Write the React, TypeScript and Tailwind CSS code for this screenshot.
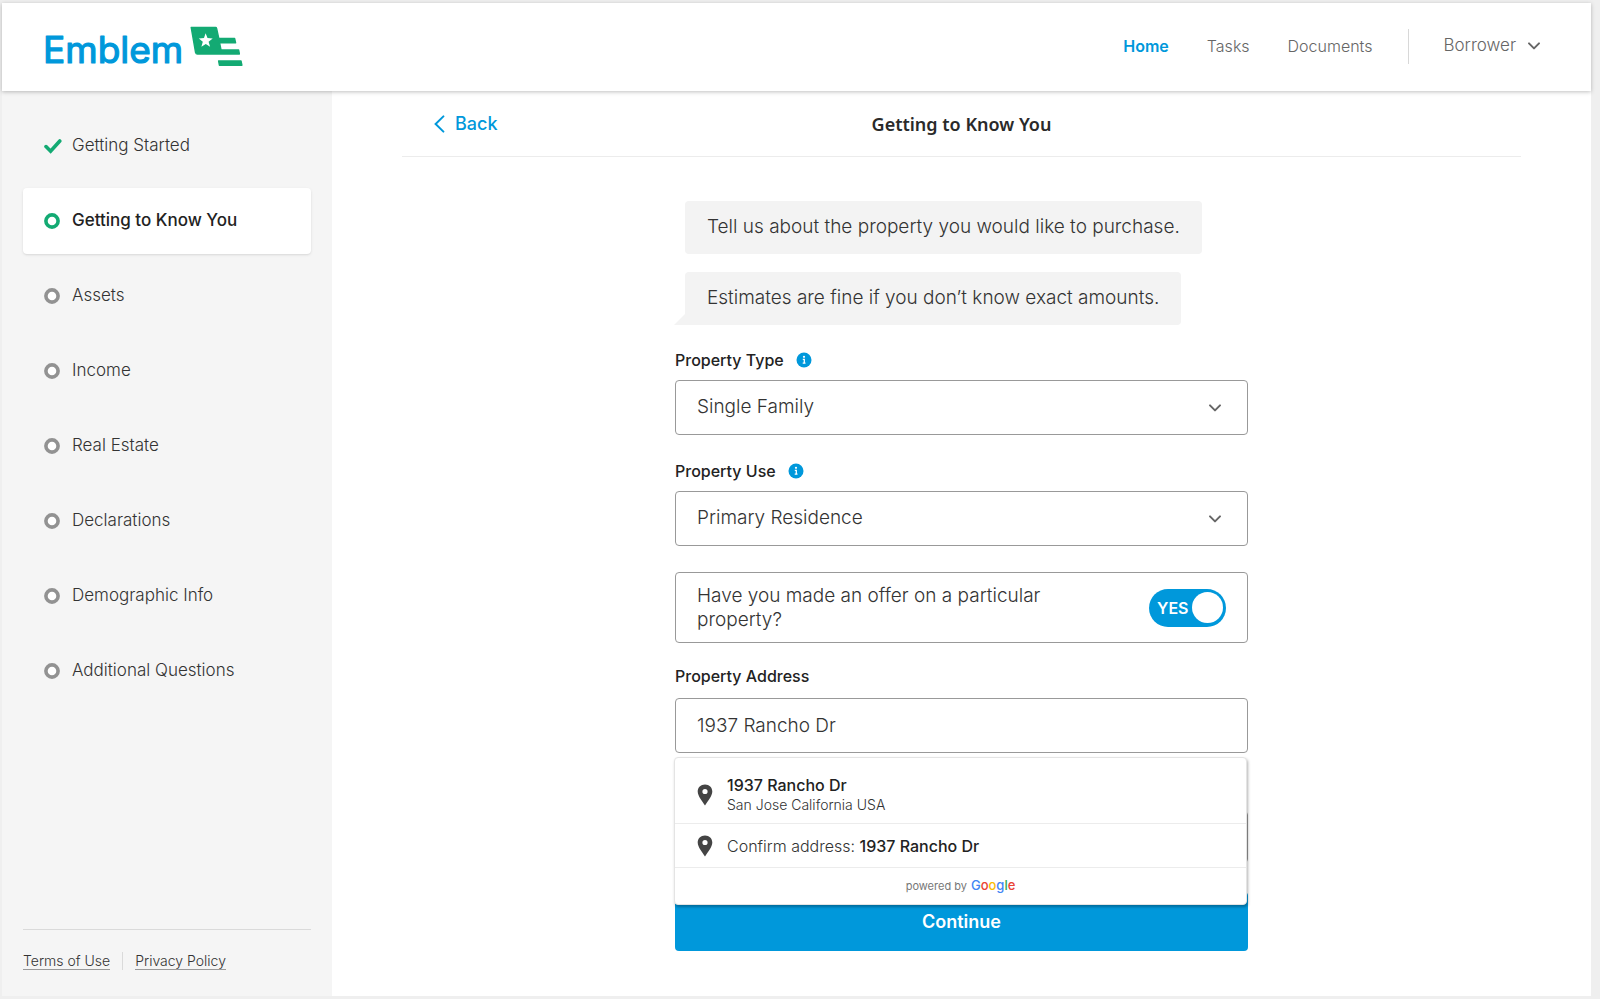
import { useState } from "react";
import type { ReactNode } from "react";

const font = "font-['Inter','Liberation_Sans',sans-serif]";

function Logo() {
  return (
    <svg width="200" height="56" viewBox="0 -7 200 56" role="img" aria-label="Emblem" className="block overflow-visible">
      <text
        x="-1"
        y="37"
        className="font-['Inter',sans-serif] text-[37px] font-normal"
        fill="#0098db"
        stroke="#0098db"
        strokeWidth="1.2"
        strokeLinejoin="round"
      >
        Emblem
      </text>
      <g fill="#13aa73" stroke="#13aa73" strokeWidth="1.4" strokeLinejoin="round">
        <path d="M147.2 1.4 H171.6 Q172.4 1.4 172.6 2.3 L174.8 12.4 H190.6 L191.6 16.8 H175.6 L177 24 H194.6 L195.4 28 H153.4 Q152 28 151.6 26.6 Z" />
        <path d="M174.6 34.9 H197 L197.9 39.2 H175.4 Z" />
      </g>
      <path
        fill="#fff"
        d="M161.6 7.2 L163.5 12.1 L168.7 12.4 L164.6 15.7 L166.1 20.8 L161.8 18 L157.4 20.8 L158.8 15.7 L154.8 12.4 L160 12.1 Z"
      />
    </svg>
  );
}

function Chevron({ className }: { className?: string }) {
  return (
    <svg width="14" height="10" viewBox="0 0 14 10" className={className} aria-hidden="true">
      <path d="M2 2.4 L7 7.4 L12 2.4" fill="none" stroke="#666" strokeWidth="2" strokeLinecap="round" strokeLinejoin="round" />
    </svg>
  );
}

function Ring({ className }: { className: string }) {
  return (
    <svg width="16" height="16" viewBox="0 0 16 16" className={className} aria-hidden="true">
      <circle cx="8" cy="8" r="6.1" fill="#fff" stroke="currentColor" strokeWidth="3.6" />
    </svg>
  );
}

function Check() {
  return (
    <svg width="18" height="16" viewBox="0 0 18 16" className="-mr-0.5" aria-hidden="true">
      <path d="M2 8.6 L6.6 13.2 L15.8 3" fill="none" stroke="#13aa73" strokeWidth="3.6" strokeLinecap="round" />
    </svg>
  );
}

function Info() {
  return (
    <svg width="16" height="16" viewBox="0 0 16 16" aria-hidden="true">
      <circle cx="8" cy="8" r="7.5" fill="#0098db" />
      <circle cx="8" cy="4.8" r="1.1" fill="#fff" />
      <path d="M6.8 7.3 H8.3 V11 M6.7 11.2 H9.5" fill="none" stroke="#fff" strokeWidth="1.3" />
    </svg>
  );
}

function Pin() {
  return (
    <svg width="16" height="22" viewBox="0 0 16 22" className="shrink-0" aria-hidden="true">
      <path
        fillRule="evenodd"
        fill="#444"
        d="M8 0.4 C3.7 0.4 0.7 3.5 0.7 7.5 C0.7 12.2 5.6 17.6 8 21.6 C10.4 17.6 15.3 12.2 15.3 7.5 C15.3 3.5 12.3 0.4 8 0.4 Z M8 4.9 A2.6 2.6 0 1 1 8 10.1 A2.6 2.6 0 1 1 8 4.9 Z"
      />
    </svg>
  );
}

type Step = { label: string; state: "done" | "active" | "todo" };

const steps: Step[] = [
  { label: "Getting Started", state: "done" },
  { label: "Getting to Know You", state: "active" },
  { label: "Assets", state: "todo" },
  { label: "Income", state: "todo" },
  { label: "Real Estate", state: "todo" },
  { label: "Declarations", state: "todo" },
  { label: "Demographic Info", state: "todo" },
  { label: "Additional Questions", state: "todo" },
];

function StepLink({ step }: { step: Step }) {
  const active = step.state === "active";
  return (
    <a
      href="#"
      aria-current={active ? "step" : undefined}
      className={
        "flex h-[66px] items-center gap-3 rounded px-[21px] text-[17px] " +
        (active ? "bg-white font-medium text-[#222] shadow-sm" : "font-light text-[#333]")
      }
    >
      {step.state === "done" ? <Check /> : <Ring className={active ? "text-[#13aa73]" : "text-[#929292]"} />}
      {step.label}
    </a>
  );
}

function SelectField({ id, label, options }: { id: string; label: string; options: string[] }) {
  return (
    <div>
      <div className="flex h-5 items-center gap-3">
        <label htmlFor={id} className="text-base font-medium text-[#222]">
          {label}
        </label>
        <button type="button" aria-label={"About " + label}>
          <Info />
        </button>
      </div>
      <div className="relative mt-2.5">
        <select
          id={id}
          className="block h-[55px] w-full appearance-none rounded border border-[#999] bg-white px-[21px] text-[19px] font-light text-[#333]"
        >
          {options.map((o) => (
            <option key={o}>{o}</option>
          ))}
        </select>
        <Chevron className="pointer-events-none absolute right-[26px] top-[23px]" />
      </div>
    </div>
  );
}

function Suggestion({ children, className }: { children: ReactNode; className: string }) {
  return (
    <button type="button" className={"flex w-full items-center gap-[14px] border-b border-[#ececec] px-[22px] text-left " + className}>
      <Pin />
      {children}
    </button>
  );
}

function Google() {
  return (
    <span className="text-[13px] font-medium">
      <span className="text-[#4285f4]">G</span>
      <span className="text-[#ea4335]">o</span>
      <span className="text-[#fbbc05]">o</span>
      <span className="text-[#4285f4]">g</span>
      <span className="text-[#34a853]">l</span>
      <span className="text-[#ea4335]">e</span>
    </span>
  );
}

export default function App() {
  const [offer, setOffer] = useState(true);
  const [address, setAddress] = useState("1937 Rancho Dr");

  return (
    <div className={"flex min-h-screen flex-col bg-[#efefef] pb-[3px] pl-[2px] pr-[9px] pt-[3px] " + font}>
      <header className="relative flex h-[88px] items-center justify-between bg-white pl-[42px] pr-[50px] shadow-[0_1px_4px_rgba(0,0,0,0.25)]">
        <a href="#">
          <Logo />
        </a>
        <nav className="flex items-center gap-9 pb-0.5 font-light text-[#666]">
          <div className="flex gap-[38px] text-base">
            <a href="#" className="font-semibold text-[#0098db]">
              Home
            </a>
            <a href="#">Tasks</a>
            <a href="#">Documents</a>
          </div>
          <button type="button" className="flex h-[35px] items-center gap-[11px] border-l border-[#d8d8d8] pl-[34px] text-[17px]">
            Borrower
            <Chevron />
          </button>
        </nav>
      </header>

      <div className="flex flex-1">
        <aside className="flex w-[330px] shrink-0 flex-col justify-between bg-[#f5f5f5] px-[21px] pt-[22px]">
          <nav className="flex flex-col gap-[9px]">
            {steps.map((s) => (
              <StepLink key={s.label} step={s} />
            ))}
          </nav>
          <footer className="flex h-[67px] items-center border-t border-[#dadada] pb-1 text-sm font-light text-[#333]">
            <a href="#" className="border-b border-[#999] leading-4">
              Terms of Use
            </a>
            <span className="mx-3 h-[18px] w-px bg-[#dadada]" />
            <a href="#" className="border-b border-[#999] leading-4">
              Privacy Policy
            </a>
          </footer>
        </aside>

        <main className="flex-1 bg-white px-[70px]">
          <div className="grid h-[66px] grid-cols-3 items-center border-b border-[#ececec]">
            <a href="#" className="ml-8 flex items-center gap-2.5 justify-self-start text-lg font-medium text-[#0098db]">
              <svg width="11" height="18" viewBox="0 0 11 18" aria-hidden="true">
                <path d="M9.4 1.4 L1.6 9 L9.4 16.6" fill="none" stroke="currentColor" strokeWidth="2" strokeLinecap="round" />
              </svg>
              Back
            </a>
            <h1 className="justify-self-center font-['Noto_Sans',sans-serif] text-lg font-semibold text-[#2a2a2a]">
              Getting to Know You
            </h1>
          </div>

          <form className="mx-auto mt-11 w-full max-w-[573px]" onSubmit={(e) => e.preventDefault()}>
            <div className="ml-[10px] flex flex-col items-start gap-[18px] text-[19px] font-light text-[#333]">
              <p className="flex h-[53px] items-center rounded bg-[#f3f3f3] px-[22px]">
                Tell us about the property you would like to purchase.
              </p>
              <p className="relative flex h-[53px] items-center rounded rounded-bl-none bg-[#f3f3f3] px-[22px]">
                <svg width="11" height="11" viewBox="0 0 11 11" className="absolute bottom-0 right-full" aria-hidden="true">
                  <path d="M11 0 V11 H0 Z" fill="#f3f3f3" />
                </svg>
                Estimates are fine if you don’t know exact amounts.
              </p>
            </div>

            <div className="mt-[25px] flex flex-col gap-[26px]">
              <SelectField id="property-type" label="Property Type" options={["Single Family", "Condominium", "Townhouse"]} />
              <SelectField id="property-use" label="Property Use" options={["Primary Residence", "Second Home", "Investment"]} />

              <label className="flex h-[71px] items-center justify-between rounded border border-[#999] px-[21px] text-[19px] leading-6 font-light text-[#333]">
                <span className="max-w-[380px]">Have you made an offer on a particular property?</span>
                <input
                  type="checkbox"
                  role="switch"
                  className="peer sr-only"
                  checked={offer}
                  onChange={(e) => setOffer(e.target.checked)}
                />
                <span className="flex h-[38px] w-[77px] flex-row-reverse items-center justify-between rounded-full bg-[#0098db] pl-2 pr-[3px] text-base font-semibold text-white peer-focus-visible:outline-2">
                  <span className="size-[31px] rounded-full bg-white" />
                  {offer ? "YES" : "NO"}
                </span>
              </label>
            </div>

            <div className="relative mt-[23px]">
              <label htmlFor="address" className="block h-5 text-base leading-5 font-medium text-[#222]">
                Property Address
              </label>
              <input
                id="address"
                value={address}
                onChange={(e) => setAddress(e.target.value)}
                className="mt-3 block h-[55px] w-full rounded border border-[#999] px-[21px] text-[19px] font-light text-[#333]"
              />
              <div className="absolute -left-px right-px top-full z-10 mt-1 rounded border border-[#e4e4e4] bg-white shadow-[1px_2px_3px_rgba(0,0,0,0.3)]">
                <Suggestion className="h-[66px] pt-2">
                  <span className="flex flex-col">
                    <span className="text-base leading-5 font-medium text-[#222]">1937 Rancho Dr</span>
                    <span className="text-sm leading-5 font-light text-[#333]">San Jose California USA</span>
                  </span>
                </Suggestion>
                <Suggestion className="h-11">
                  <span className="text-base leading-5 font-light text-[#333]">
                    Confirm address: <span className="font-medium text-[#222]">1937 Rancho Dr</span>
                  </span>
                </Suggestion>
                <p className="flex h-9 items-center justify-center gap-1 text-[11px] text-[#777]">
                  powered by <Google />
                </p>
              </div>
            </div>

            <div className="mt-[58px] h-[52px] rounded border border-[#999]" />
            <button type="submit" className="mt-[29px] block h-[59px] w-full rounded bg-[#0098db] text-lg font-semibold text-white">
              Continue
            </button>
          </form>
        </main>
      </div>
    </div>
  );
}
